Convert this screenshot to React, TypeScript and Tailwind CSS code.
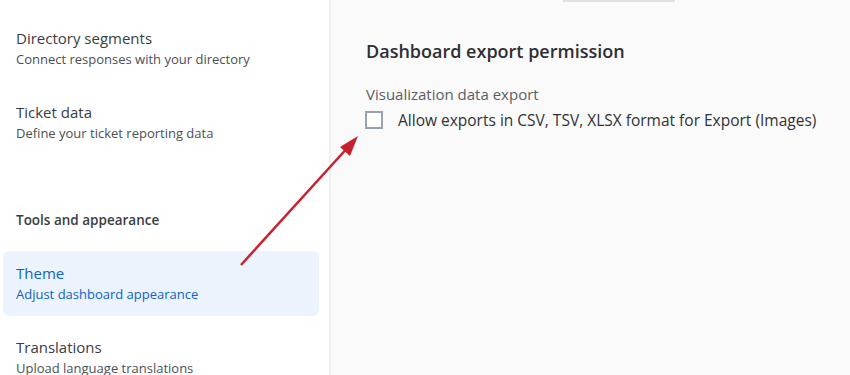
import React from "react";

type NavItem = {
  title: string;
  subtitle: string;
  active?: boolean;
};

const font = { fontFamily: '"Open Sans", "Noto Sans", sans-serif' };

const SidebarItem: React.FC<NavItem> = ({ title, subtitle, active }) => {
  if (active) {
    return (
      <div className="ml-[3px] mr-[10px] rounded-md bg-[#ebf3fc] pl-[13px] pt-[11px] pb-[12px]">
        <div className="text-[15px] leading-[22px] text-[#1162c6]">{title}</div>
        <div className="text-[13px] leading-[20px] text-[#1162c6]">{subtitle}</div>
      </div>
    );
  }
  return (
    <div className="px-4 py-4">
      <div className="text-[15px] leading-[22px] text-[#3a3d42]">{title}</div>
      <div className="text-[13px] leading-[20px] text-[#4b4f54]">{subtitle}</div>
    </div>
  );
};

export default function App() {
  return (
    <div className="relative flex h-[375px] w-[850px] overflow-hidden bg-[#fafafa]" style={font}>
      {/* sidebar */}
      <div className="flex w-[331px] shrink-0 flex-col border-r-2 border-[#efefef] bg-white pt-[11px]">
        <SidebarItem title="Directory segments" subtitle="Connect responses with your directory" />
        <SidebarItem title="Ticket data" subtitle="Define your ticket reporting data" />
        <div className="mt-[28px] h-px w-full bg-[#ececec]" />
        <div className="px-4 pt-[23px] pb-[21px] text-[13.5px] font-semibold leading-[20px] text-[#3a3d42]">
          Tools and appearance
        </div>
        <SidebarItem title="Theme" subtitle="Adjust dashboard appearance" active />
        <div className="px-4 pt-[20px]">
          <div className="text-[15px] leading-[22px] text-[#3a3d42]">Translations</div>
          <div className="text-[13px] leading-[20px] text-[#4b4f54]">Upload language translations</div>
        </div>
      </div>

      {/* main panel */}
      <div className="flex flex-1 flex-col">
        <div className="ml-[232px] h-[2px] w-[112px] bg-[#e1e1e1]" />
        <div className="pl-[35px] pt-[37px]">
          <h2 className="text-[18px] font-semibold leading-[24px] text-[#2d2f33]">
            Dashboard export permission
          </h2>
          <div className="mt-[20px] text-[15px] leading-[22px] text-[#5a5e63]">
            Visualization data export
          </div>
          <label className="mt-[5px] flex items-center gap-[15px]">
            <span className="-ml-px h-[18px] w-[18px] border-2 border-[#9aa3ad] bg-white" />
            <span className="text-[15.5px] leading-[20px] text-[#2f3236]">
              Allow exports in CSV, TSV, XLSX format for Export (Images)
            </span>
          </label>
        </div>
      </div>

      {/* annotation arrow */}
      <svg
        className="pointer-events-none absolute left-0 top-0"
        width="850"
        height="375"
        viewBox="0 0 850 375"
      >
        <line x1="241" y1="265" x2="350" y2="145" stroke="#c8202f" strokeWidth="2.5" />
        <polygon points="358,136 340,147 350,156" fill="#c8202f" />
      </svg>
    </div>
  );
}
